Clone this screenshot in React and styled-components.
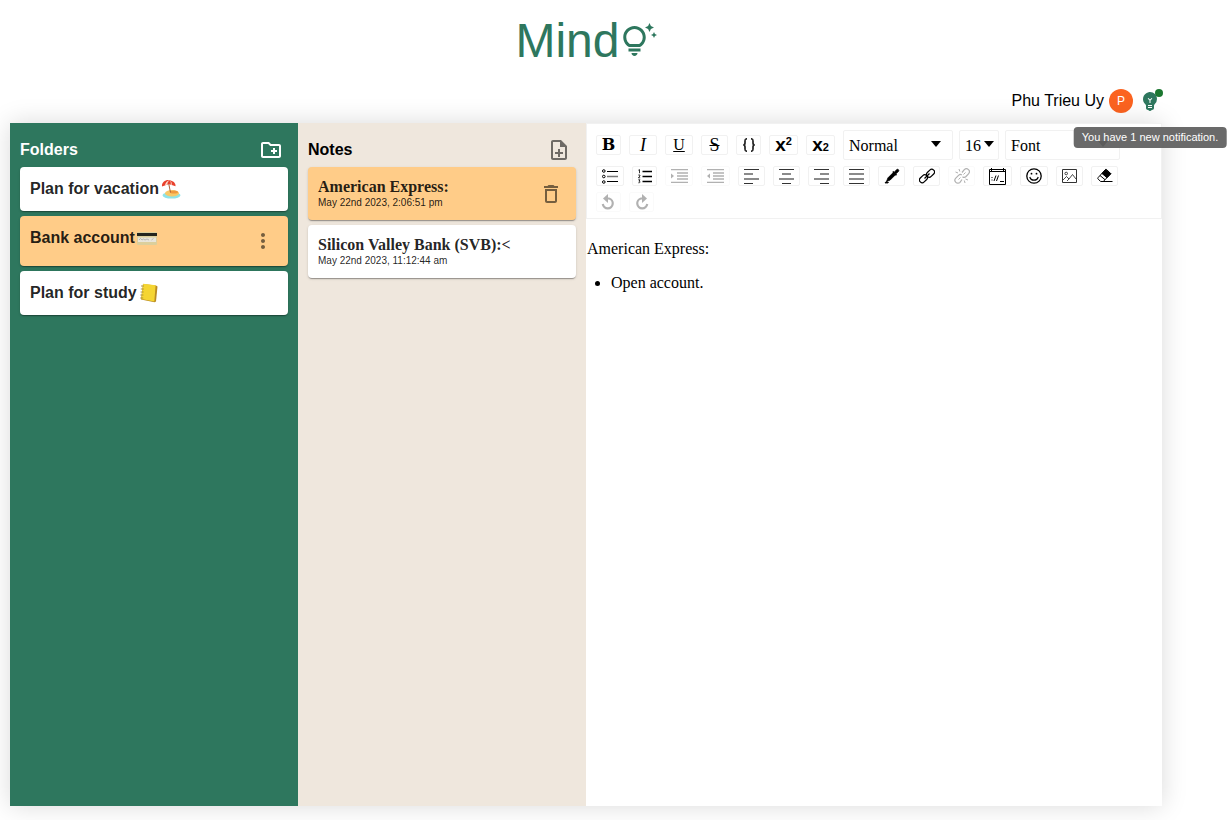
import React from "react";
import styled, { createGlobalStyle } from "styled-components";
import {
  MdOutlineTipsAndUpdates,
  MdEmojiObjects,
  MdOutlineCreateNewFolder,
  MdOutlineNoteAdd,
  MdDeleteOutline,
  MdMoreVert,
} from "react-icons/md";

const GREEN = "#2e775e";
const SELECTED = "#ffcc88";
const SANS = '"Liberation Sans", Arial, Helvetica, sans-serif';
const SERIF = '"Liberation Serif", "Times New Roman", serif';

const GlobalStyle = createGlobalStyle`
  *, *::before, *::after { box-sizing: border-box; }
  body { margin: 0; background: #fff; font-family: ${SANS}; font-size: 16px; color: #000; }
`;

const Page = styled.div`
  display: flex;
  flex-direction: column;
  min-height: 100vh;
  padding: 0 70px 14px 10px;
`;

const Logo = styled.h1`
  display: flex;
  justify-content: center;
  align-items: center;
  gap: 1px;
  height: 81px;
  margin: 0;
  color: ${GREEN};
  font-size: 48px;
  font-weight: 400;
  line-height: 56px;
`;

const UserBar = styled.header`
  display: flex;
  justify-content: flex-end;
  align-items: center;
  gap: 5px;
  padding: 8px 0 10px;
`;

const Avatar = styled.span`
  display: grid;
  place-items: center;
  width: 24px;
  height: 24px;
  border-radius: 50%;
  background: #fb6320;
  color: #fff;
  font-size: 12px;
`;

const PlainButton = styled.button`
  display: grid;
  place-items: center;
  padding: 0;
  border: 0;
  background: none;
  color: ${(p) => p.$color};
  cursor: pointer;
`;

const Notification = styled.div`
  position: relative;
`;

const Dot = styled.span`
  position: absolute;
  top: 0;
  right: -1px;
  width: 8px;
  height: 8px;
  border-radius: 50%;
  background: #1b7730;
`;

const Tooltip = styled.div`
  position: absolute;
  z-index: 2;
  top: 38px;
  left: 50%;
  transform: translateX(-50%);
  padding: 3px 8px;
  border-radius: 4px;
  background: rgba(97, 97, 97, 0.94);
  color: #fff;
  font-size: 11px;
  line-height: 15px;
  white-space: nowrap;
`;

const Workspace = styled.main`
  display: grid;
  grid-template-columns: 1fr 1fr 2fr;
  flex: 1;
  box-shadow: 0 0 24px rgba(0, 0, 0, 0.15);
`;

const Panel = styled.section`
  padding: 10px;
  background: ${(p) => p.$background};
  color: ${(p) => p.$color};
`;

const PanelHead = styled.div`
  display: flex;
  justify-content: space-between;
  align-items: center;
  height: 34px;
  padding-right: 5px;
`;

const PanelTitle = styled.h2`
  margin: 0;
  font-size: 16px;
  line-height: 20px;
`;

const CardList = styled.ul`
  display: flex;
  flex-direction: column;
  gap: 5px;
  margin: 0;
  padding: 0;
  list-style: none;
`;

const Card = styled.li`
  display: flex;
  justify-content: space-between;
  align-items: ${(p) => (p.$top ? "flex-start" : "center")};
  min-height: ${(p) => p.$height}px;
  padding: 10px;
  border-radius: 4px;
  background: ${(p) => (p.$selected ? SELECTED : "#fff")};
  color: rgba(0, 0, 0, 0.87);
  box-shadow: 0 2px 1px -1px rgba(0, 0, 0, 0.2), 0 1px 1px rgba(0, 0, 0, 0.14),
    0 1px 3px rgba(0, 0, 0, 0.12);
`;

const FolderName = styled.span`
  display: flex;
  align-items: center;
  gap: 2px;
  height: 24px;
  font-weight: 700;
`;

const CardAction = styled(PlainButton)`
  align-self: center;
  padding: 0 3px;
`;

const NoteTitle = styled.h3`
  margin: 0;
  font-family: ${SERIF};
  font-size: 16px;
  line-height: 19px;
`;

const NoteDate = styled.time`
  display: block;
  font-size: 10px;
  line-height: 14px;
`;

const Editor = styled.section`
  background: #fff;
  font-family: ${SERIF};
`;

const Toolbar = styled.div`
  display: flex;
  flex-direction: column;
  gap: 6px;
  padding: 6px 9px;
  border: 1px solid #f1f1f1;
`;

const ToolRow = styled.div`
  display: flex;
  align-items: center;
  flex-wrap: wrap;
  gap: 8px;
`;

const Tool = styled.button`
  display: flex;
  justify-content: center;
  align-items: center;
  width: ${(p) => p.$width || 27}px;
  height: 20px;
  padding: 0;
  border: 1px solid #f1f1f1;
  border-radius: 2px;
  background: #fff;
  color: #000;
  opacity: ${(p) => (p.disabled ? 0.3 : 1)};
`;

const Letter = styled.span`
  font-family: ${(p) => p.$family || SERIF};
  font-size: ${(p) => p.$size || 18}px;
  font-weight: ${(p) => p.$weight || 400};
  font-style: ${(p) => p.$style || "normal"};
  text-decoration: ${(p) => p.$line || "none"};
  line-height: 18px;
`;

const Script = styled.span`
  display: flex;
  align-items: ${(p) => (p.$raised ? "flex-start" : "flex-end")};
  font-family: ${SANS};
  font-size: 19px;
  font-weight: 700;
  line-height: ${(p) => (p.$raised ? 18 : 14)}px;

  sub, sup { font-size: 11px; line-height: 10px; }
`;

const Pickers = styled.div`
  display: flex;
  gap: 6px;
`;

const Picker = styled.label`
  position: relative;
  display: flex;
  width: ${(p) => p.$width}px;

  select {
    width: 100%;
    height: 30px;
    padding: 0 5px;
    border: 1px solid #f1f1f1;
    border-radius: 2px;
    appearance: none;
    background: #fff;
    color: #000;
    font-family: ${SERIF};
    font-size: 16px;
  }

  svg {
    position: absolute;
    top: 11px;
    right: ${(p) => p.$caret}px;
    pointer-events: none;
  }
`;

const Document = styled.div`
  margin-top: 5px;
  padding: 1px;
  line-height: 18px;
  outline: none;

  p { margin: 15px 0 16px; }
  ul { margin: 16px 0; padding-left: 24px; }
`;

const Svg = ({ w = 16, h = 16, box, children }) => (
  <svg width={w} height={h} viewBox={box || `0 0 ${w} ${h}`} fill="none" stroke="currentColor" aria-hidden="true">
    {children}
  </svg>
);

const Lines = ({ start, end }) => (
  <Svg w={15} h={15}>
    <path d={`M0 .5h15M${start} 14.500H${end}`} stroke="#333" />
    <path d={`M${start} 5H${end}M0 10h15`} stroke="#8a8a8a" strokeWidth="2" />
  </Svg>
);

const Bullets = () => (
  <Svg w={16} h={15}>
    <circle cx="1.8" cy="2" r="1.3" />
    <circle cx="1.8" cy="7.5" r="1.3" />
    <circle cx="1.8" cy="13" r="1.3" />
    <path d="M5 2.5h11M5 12.500h11" />
    <path d="M5 7.500h11" stroke="#777" strokeWidth="1.500" />
  </Svg>
);

const Numbers = () => (
  <Svg w={14} h={15}>
    <path d="M.4 1.2 1.5.6v3.6M.3 6h1.6v1L.4 8.8h1.8M.3 10.8H2l-1 1.4c1.6 0 1.4 1.8-.6 1.6" strokeWidth=".8" />
    <path d="M4.500 2.500h9.500M4.500 7.500h9.500M4.500 12.500h9.500" strokeWidth="1.400" />
  </Svg>
);

const Indent = ({ out }) => (
  <Svg w={17} h={14}>
    <path d="M0 .5h17M6 4h11M6 7h11M6 10h11M0 13.500h17" strokeWidth="1.400" />
    <path d={out ? "M3 4.500v5L0 7z" : "M0 4.500v5L3 7z"} fill="currentColor" stroke="none" />
  </Svg>
);

const Braces = () => (
  <Svg w={14} h={14}>
    <path d="M5 .8C3 .8 3 1.300 3 3v2c0 1.400-.5 2-1.800 2C2.500 7 3 7.600 3 9v2c0 1.700 0 2.200 2 2.200M9 .8c2 0 2 .5 2 2.200v2c0 1.400.5 2 1.800 2C11.500 7 11 7.600 11 9v2c0 1.700 0 2.200-2 2.200" strokeWidth="1.700" stroke="#222" />
  </Svg>
);

const Dropper = () => (
  <Svg>
    <path d="M9.300 4.500 4 9.800 2.500 13.500l3.700-1.500 5.300-5.300z" fill="currentColor" strokeWidth=".8" />
    <path d="m8.800 3.500 3.700 3.700" strokeWidth="1.600" />
    <path d="M10.300 4.200 12.700 1.600c1.200-1 2.800.6 1.800 1.800l-2.600 2.400zM1 15c.5-1.500 2-1.500 3.500-.5L4 15z" fill="currentColor" strokeWidth=".8" />
  </Svg>
);

const Chain = ({ broken }) => (
  <Svg>
    {broken ? (
      <>
        <path d="m8 4.500 2.300-2.800a2.900 2.900 0 0 1 4.200 4.100L12 8.500c-1 1-2.500 1-3.500.2M8 11.500l-2 2.800a2.900 2.900 0 0 1-4.200-4.100l3-3c1-1 2.200-.8 3-.2" strokeWidth="1.200" />
        <path d="m9.500 6.500 2-2M4.500 11.500l2-2M1.500 4l2.500 1M5 1l.8 2.500M11.500 11l2.500 1M10.300 12.500 11 15" />
      </>
    ) : (
      <>
        <rect x="7" y="2.500" width="9" height="5.500" rx="2.750" transform="rotate(-45 11.500 5.250)" strokeWidth="1.200" />
        <rect x="0" y="8" width="9" height="5.500" rx="2.750" transform="rotate(-45 4.500 10.750)" strokeWidth="1.200" />
        <path d="m5.500 10.500 5-5" strokeWidth="1.200" />
      </>
    )}
  </Svg>
);

const Embed = () => (
  <Svg w={17} h={17}>
    <path d="M.5 1.500h16v15H.5zM.5 3.500h16M2.500 0v3M14.500 0v3" />
    <path d="M3 9v1M3 11.500v1M7 7.500l-2 5.500M9.500 7.500l-2 5.500M11 13.500h4" />
  </Svg>
);

const Smile = () => (
  <Svg>
    <circle cx="8" cy="8" r="7.200" strokeWidth="1.300" />
    <path d="M3.800 9c1.100 4.200 7.300 4.200 8.400 0" strokeWidth="1.200" />
    <circle cx="5.500" cy="5.700" r=".9" fill="currentColor" stroke="none" />
    <circle cx="10.500" cy="5.700" r=".9" fill="currentColor" stroke="none" />
  </Svg>
);

const Picture = () => (
  <Svg w={15} h={14}>
    <path d="M.5.500h14v13H.5z" stroke="#333" />
    <circle cx="4.200" cy="4.500" r="1.300" strokeWidth=".7" />
    <path d="m1 11 3.500-3.500L7 10l3.500-4.500L14 10M5 12l2-2" strokeWidth=".7" />
  </Svg>
);

const Eraser = () => (
  <Svg>
    <path d="M8.200 1.800 1.200 9.500c-.6.700-.5 1.200 0 1.700l2.500 2.300h2.600l7.500-7.800-4-4c-.5-.5-1.100-.5-1.600.1z" />
    <path d="M8.700 1.500 5 5.500l5 4.200 3.800-4z" fill="currentColor" />
    <path d="m3 7.500 5 4.200M6 13.500h9.500" />
  </Svg>
);

const Turn = ({ redo }) => (
  <Svg w={15} h={16}>
    <g transform={redo ? "matrix(-1 0 0 1 15 0)" : undefined}>
      <path d="M6 4.500h2a5 5 0 1 1-6.200 5.500" strokeWidth="2.200" />
      <path d="M7 0v9L2 4.500z" fill="currentColor" stroke="none" />
    </g>
  </Svg>
);

const Beach = () => (
  <Svg w={20} h={20}>
    <g stroke="none">
      <ellipse cx="10.500" cy="16.300" rx="9" ry="3.300" fill="#8fe3e8" />
      <ellipse cx="11" cy="14.300" rx="7" ry="3.200" fill="#f7c968" />
      <ellipse cx="13" cy="13" rx="4" ry="1.600" fill="#f09a3e" />
      <path d="M1 7.500C.5 3 5 .2 9 1.200c3.700.8 6 3.500 5.500 6L7.800 5z" fill="#e9402d" />
      <path d="M4 6.200c.5-2.700 2-4.500 5-5 1.500 1.500 2 3 1.600 5.200L7.800 5z" fill="#fbe3d4" />
      <path d="M6.300 5.500c0-2 .8-3.500 2.700-4.300.8 1.300 1 2.800.7 4.600L7.800 5z" fill="#e9402d" />
      <path d="m7.300 5 .9-.2L10 13.500H9z" fill="#a95c35" />
    </g>
  </Svg>
);

const CreditCard = () => (
  <Svg w={20} h={20}>
    <g stroke="none">
      <rect y="4" width="20" height="13" rx="1" fill="#dccf9c" />
      <path d="M0 5h20v3H0z" fill="#25251f" />
      <path d="M1 9.500h18V14H1z" fill="#e9e5da" />
    </g>
    <path d="m2 12 1.500-1.500L5 12l1.500-1 1.500 1 2-1 2 1M14.500 12l2-1.500" stroke="#a2a4a8" strokeWidth=".7" />
  </Svg>
);

const Notebook = () => (
  <Svg w={20} h={20}>
    <g stroke="none">
      <path d="m4 1 13 1.500 1.500 1-1.500 15-1.500.7L2 16.500z" fill="#b98b22" />
      <path d="m4 .8 12.600 1.400-1.300 16.300L2.300 16z" fill="#f5d532" />
    </g>
    <path d="M2 3h3M1.800 6h3M1.600 9h3M1.400 12h3M1.200 15h3" stroke="#a68a38" strokeWidth=".9" />
  </Svg>
);

const folders = [
  { name: "Plan for vacation", Emoji: Beach },
  { name: "Bank account", Emoji: CreditCard, selected: true },
  { name: "Plan for study", Emoji: Notebook },
];

const notes = [
  { title: "American Express:", date: "May 22nd 2023, 2:06:51 pm", selected: true },
  { title: "Silicon Valley Bank (SVB):<", date: "May 22nd 2023, 11:12:44 am" },
];

const inlineTools = [
  { label: "Bold", width: 25, icon: <Letter $family='"DejaVu Serif", serif' $size={16} $weight={700}>B</Letter> },
  { label: "Italic", width: 28, icon: <Letter $style="italic">I</Letter> },
  { label: "Underline", width: 28, icon: <Letter $size={16} $line="underline">U</Letter> },
  { label: "Strikethrough", icon: <Letter $line="line-through">S</Letter> },
  { label: "Monospace", width: 25, icon: <Braces /> },
  { label: "Superscript", width: 29, icon: <Script $raised>x<sup>2</sup></Script> },
  { label: "Subscript", width: 29, icon: <Script>x<sub>2</sub></Script> },
];

const blockTools = [
  { label: "Unordered list", width: 28, icon: <Bullets /> },
  { label: "Ordered list", width: 25, icon: <Numbers /> },
  { label: "Indent", width: 28, icon: <Indent />, disabled: true },
  { label: "Outdent", width: 29, icon: <Indent out />, disabled: true },
  { label: "Align left", icon: <Lines start={0} end={9} /> },
  { label: "Align center", icon: <Lines start={3} end={12} /> },
  { label: "Align right", icon: <Lines start={6} end={15} /> },
  { label: "Justify", icon: <Lines start={0} end={15} /> },
  { label: "Text colour", icon: <Dropper /> },
  { label: "Link", icon: <Chain /> },
  { label: "Unlink", icon: <Chain broken />, disabled: true },
  { label: "Embed", width: 29, icon: <Embed /> },
  { label: "Emoji", width: 28, icon: <Smile /> },
  { label: "Image", icon: <Picture /> },
  { label: "Remove formatting", icon: <Eraser /> },
];

const historyTools = [
  { label: "Undo", width: 25, icon: <Turn />, disabled: true },
  { label: "Redo", width: 25, icon: <Turn redo />, disabled: true },
];

const pickers = [
  { label: "Block type", value: "Normal", width: 110, caret: 12 },
  { label: "Font size", value: "16", width: 40, caret: 5 },
  { label: "Font family", value: "Font", width: 115, caret: 12 },
];

const Tools = ({ items }) =>
  items.map(({ label, width, icon, disabled }) => (
    <Tool key={label} type="button" aria-label={label} $width={width} disabled={disabled}>
      {icon}
    </Tool>
  ));

export default function App() {
  return (
    <>
      <GlobalStyle />
      <Page>
        <Logo>
          Mind
          <MdOutlineTipsAndUpdates size={36} aria-hidden="true" />
        </Logo>
        <UserBar>
          <span>Phu Trieu Uy</span>
          <Avatar>P</Avatar>
          <Notification>
            <PlainButton type="button" aria-label="Notifications" $color={GREEN}>
              <MdEmojiObjects size={24} />
            </PlainButton>
            <Dot />
            <Tooltip role="tooltip">You have 1 new notification.</Tooltip>
          </Notification>
        </UserBar>
        <Workspace>
          <Panel $background={GREEN} $color="#fff">
            <PanelHead>
              <PanelTitle>Folders</PanelTitle>
              <PlainButton type="button" aria-label="New folder" $color="#fff">
                <MdOutlineCreateNewFolder size={24} />
              </PlainButton>
            </PanelHead>
            <CardList>
              {folders.map(({ name, Emoji, selected }) => (
                <Card key={name} $top $selected={selected} $height={selected ? 50 : 44}>
                  <FolderName>
                    {name}
                    <Emoji />
                  </FolderName>
                  {selected && (
                    <CardAction type="button" aria-label="Folder options" $color="rgba(0, 0, 0, 0.54)">
                      <MdMoreVert size={24} />
                    </CardAction>
                  )}
                </Card>
              ))}
            </CardList>
          </Panel>
          <Panel $background="#efe7dd" $color="#000">
            <PanelHead>
              <PanelTitle>Notes</PanelTitle>
              <PlainButton type="button" aria-label="New note" $color="rgba(0, 0, 0, 0.54)">
                <MdOutlineNoteAdd size={24} />
              </PlainButton>
            </PanelHead>
            <CardList>
              {notes.map(({ title, date, selected }) => (
                <Card key={title} $selected={selected} $height={53}>
                  <div>
                    <NoteTitle>{title}</NoteTitle>
                    <NoteDate>{date}</NoteDate>
                  </div>
                  {selected && (
                    <CardAction type="button" aria-label="Delete note" $color="rgba(0, 0, 0, 0.54)">
                      <MdDeleteOutline size={24} />
                    </CardAction>
                  )}
                </Card>
              ))}
            </CardList>
          </Panel>
          <Editor>
            <Toolbar role="toolbar" aria-label="Formatting">
              <ToolRow>
                <Tools items={inlineTools} />
                <Pickers>
                  {pickers.map(({ label, value, width, caret }) => (
                    <Picker key={label} $width={width} $caret={caret}>
                      <select aria-label={label} defaultValue={value}>
                        <option>{value}</option>
                      </select>
                      <svg width="10" height="6" viewBox="0 0 10 6" aria-hidden="true">
                        <path d="M0 0h10L5 6z" />
                      </svg>
                    </Picker>
                  ))}
                </Pickers>
              </ToolRow>
              <ToolRow>
                <Tools items={blockTools} />
              </ToolRow>
              <ToolRow>
                <Tools items={historyTools} />
              </ToolRow>
            </Toolbar>
            <Document role="textbox" aria-label="Note" contentEditable suppressContentEditableWarning>
              <p>American Express:</p>
              <ul>
                <li>Open account.</li>
              </ul>
            </Document>
          </Editor>
        </Workspace>
      </Page>
    </>
  );
}
